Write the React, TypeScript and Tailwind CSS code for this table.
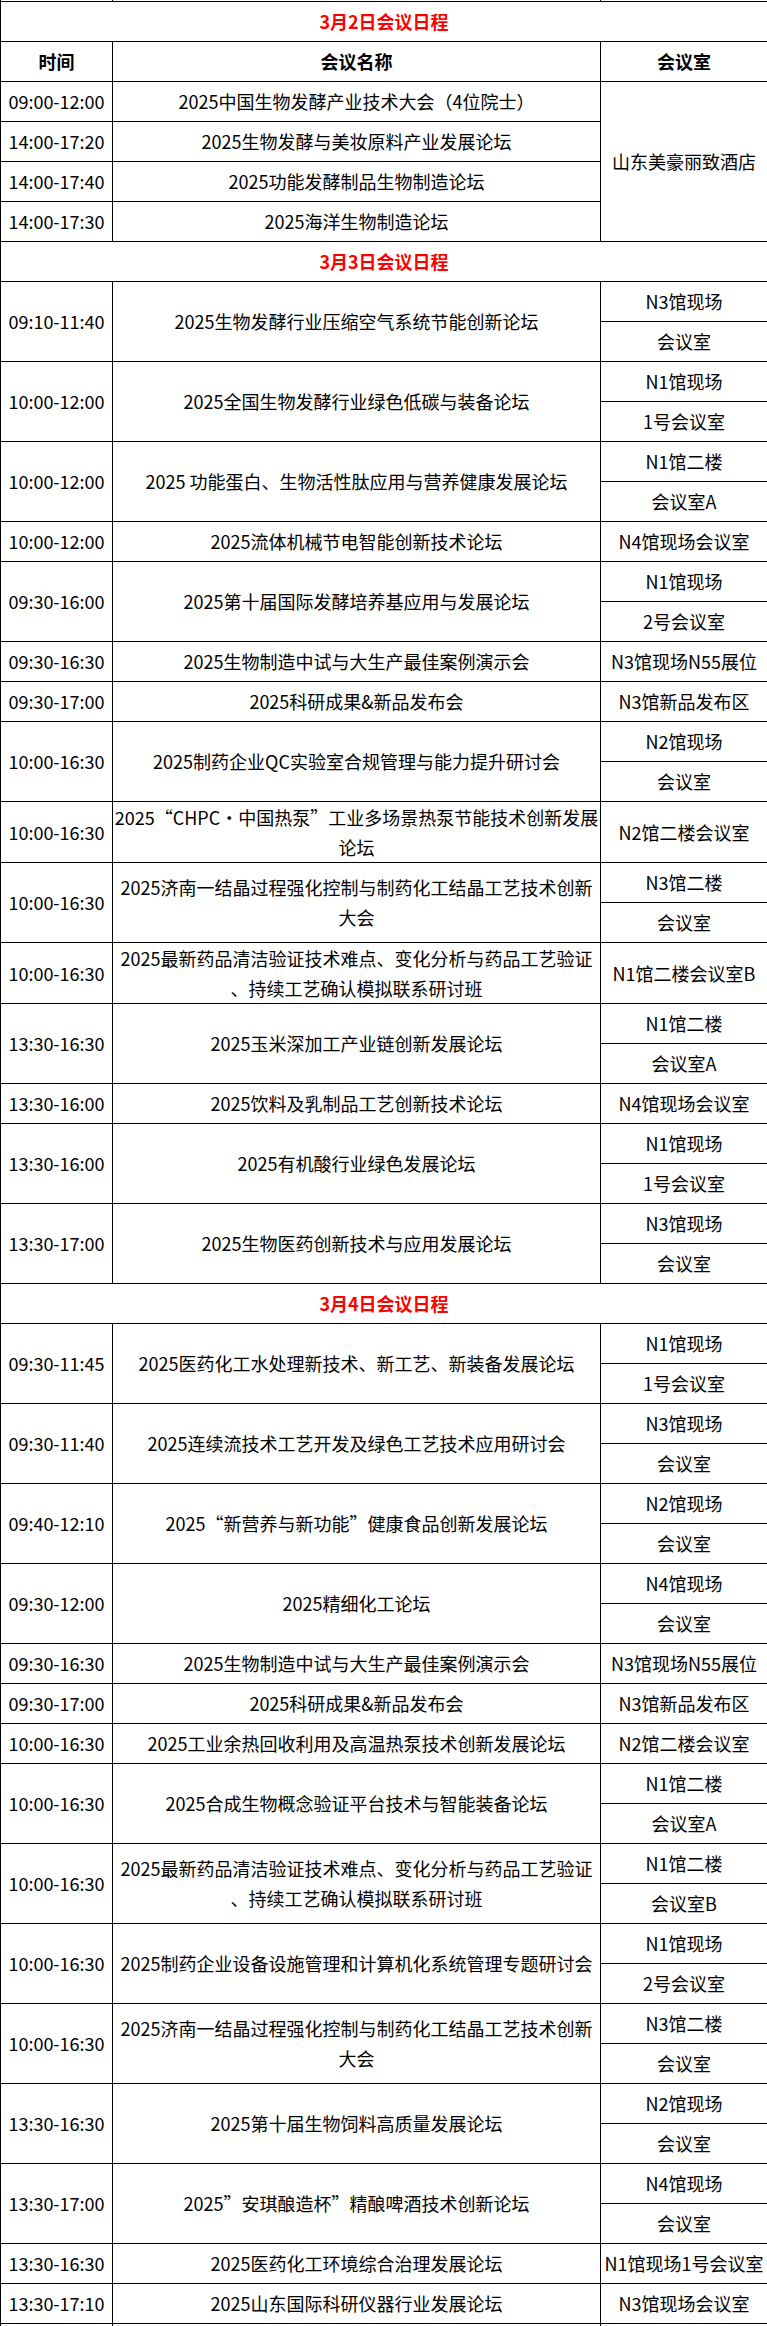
import React from "react";

type Row = { time: string; title: string | string[]; rooms: string[] };

const day3: Row[] = [
  { time: "09:10-11:40", title: "2025生物发酵行业压缩空气系统节能创新论坛", rooms: ["N3馆现场", "会议室"] },
  { time: "10:00-12:00", title: "2025全国生物发酵行业绿色低碳与装备论坛", rooms: ["N1馆现场", "1号会议室"] },
  { time: "10:00-12:00", title: "2025 功能蛋白、生物活性肽应用与营养健康发展论坛", rooms: ["N1馆二楼", "会议室A"] },
  { time: "10:00-12:00", title: "2025流体机械节电智能创新技术论坛", rooms: ["N4馆现场会议室"] },
  { time: "09:30-16:00", title: "2025第十届国际发酵培养基应用与发展论坛", rooms: ["N1馆现场", "2号会议室"] },
  { time: "09:30-16:30", title: "2025生物制造中试与大生产最佳案例演示会", rooms: ["N3馆现场N55展位"] },
  { time: "09:30-17:00", title: "2025科研成果&新品发布会", rooms: ["N3馆新品发布区"] },
  { time: "10:00-16:30", title: "2025制药企业QC实验室合规管理与能力提升研讨会", rooms: ["N2馆现场", "会议室"] },
  { time: "10:00-16:30", title: ["2025“CHPC·中国热泵”工业多场景热泵节能技术创新发展", "论坛"], rooms: ["N2馆二楼会议室"] },
  { time: "10:00-16:30", title: ["2025济南一结晶过程强化控制与制药化工结晶工艺技术创新", "大会"], rooms: ["N3馆二楼", "会议室"] },
  { time: "10:00-16:30", title: ["2025最新药品清洁验证技术难点、变化分析与药品工艺验证", "、持续工艺确认模拟联系研讨班"], rooms: ["N1馆二楼会议室B"] },
  { time: "13:30-16:30", title: "2025玉米深加工产业链创新发展论坛", rooms: ["N1馆二楼", "会议室A"] },
  { time: "13:30-16:00", title: "2025饮料及乳制品工艺创新技术论坛", rooms: ["N4馆现场会议室"] },
  { time: "13:30-16:00", title: "2025有机酸行业绿色发展论坛", rooms: ["N1馆现场", "1号会议室"] },
  { time: "13:30-17:00", title: "2025生物医药创新技术与应用发展论坛", rooms: ["N3馆现场", "会议室"] },
];

const day4: Row[] = [
  { time: "09:30-11:45", title: "2025医药化工水处理新技术、新工艺、新装备发展论坛", rooms: ["N1馆现场", "1号会议室"] },
  { time: "09:30-11:40", title: "2025连续流技术工艺开发及绿色工艺技术应用研讨会", rooms: ["N3馆现场", "会议室"] },
  { time: "09:40-12:10", title: "2025“新营养与新功能”健康食品创新发展论坛", rooms: ["N2馆现场", "会议室"] },
  { time: "09:30-12:00", title: "2025精细化工论坛", rooms: ["N4馆现场", "会议室"] },
  { time: "09:30-16:30", title: "2025生物制造中试与大生产最佳案例演示会", rooms: ["N3馆现场N55展位"] },
  { time: "09:30-17:00", title: "2025科研成果&新品发布会", rooms: ["N3馆新品发布区"] },
  { time: "10:00-16:30", title: "2025工业余热回收利用及高温热泵技术创新发展论坛", rooms: ["N2馆二楼会议室"] },
  { time: "10:00-16:30", title: "2025合成生物概念验证平台技术与智能装备论坛", rooms: ["N1馆二楼", "会议室A"] },
  { time: "10:00-16:30", title: ["2025最新药品清洁验证技术难点、变化分析与药品工艺验证", "、持续工艺确认模拟联系研讨班"], rooms: ["N1馆二楼", "会议室B"] },
  { time: "10:00-16:30", title: "2025制药企业设备设施管理和计算机化系统管理专题研讨会", rooms: ["N1馆现场", "2号会议室"] },
  { time: "10:00-16:30", title: ["2025济南一结晶过程强化控制与制药化工结晶工艺技术创新", "大会"], rooms: ["N3馆二楼", "会议室"] },
  { time: "13:30-16:30", title: "2025第十届生物饲料高质量发展论坛", rooms: ["N2馆现场", "会议室"] },
  { time: "13:30-17:00", title: "2025”安琪酿造杯”精酿啤酒技术创新论坛", rooms: ["N4馆现场", "会议室"] },
  { time: "13:30-16:30", title: "2025医药化工环境综合治理发展论坛", rooms: ["N1馆现场1号会议室"] },
  { time: "13:30-17:10", title: "2025山东国际科研仪器行业发展论坛", rooms: ["N3馆现场会议室"] },
];

const cell = "border border-black p-0 text-center align-middle whitespace-nowrap";

function Title({ lines }: { lines: string | string[] }) {
  if (typeof lines === "string") return <>{lines}</>;
  return (
    <>
      {lines.map((l, i) => (
        <React.Fragment key={i}>
          {i > 0 && <br />}
          {l}
        </React.Fragment>
      ))}
    </>
  );
}

function DayTitle({ text }: { text: string }) {
  return (
    <tr className="h-[40px]">
      <td colSpan={3} className={`${cell} font-bold text-[#ff0000]`}>
        {text}
      </td>
    </tr>
  );
}

function Rows({ rows }: { rows: Row[] }) {
  return (
    <>
      {rows.map((r, i) => {
        const multi = Array.isArray(r.title);
        if (r.rooms.length === 2) {
          return (
            <React.Fragment key={i}>
              <tr className="h-[40px]">
                <td rowSpan={2} className={cell}>{r.time}</td>
                <td rowSpan={2} className={cell}><Title lines={r.title} /></td>
                <td className={cell}>{r.rooms[0]}</td>
              </tr>
              <tr className="h-[40px]">
                <td className={cell}>{r.rooms[1]}</td>
              </tr>
            </React.Fragment>
          );
        }
        return (
          <tr key={i} className={multi ? "h-[60px]" : "h-[40px]"}>
            <td className={cell}>{r.time}</td>
            <td className={cell}><Title lines={r.title} /></td>
            <td className={cell}>{r.rooms[0]}</td>
          </tr>
        );
      })}
    </>
  );
}

export default function App() {
  const day2 = [
    { time: "09:00-12:00", title: "2025中国生物发酵产业技术大会（4位院士）" },
    { time: "14:00-17:20", title: "2025生物发酵与美妆原料产业发展论坛" },
    { time: "14:00-17:40", title: "2025功能发酵制品生物制造论坛" },
    { time: "14:00-17:30", title: "2025海洋生物制造论坛" },
  ];
  return (
    <div className="w-[767px] h-[2326px] overflow-hidden bg-white text-black font-['Noto_Sans_CJK_SC',sans-serif] text-[18px] leading-[30px]">
      <table className="w-[767px] table-fixed border-collapse">
        <colgroup>
          <col className="w-[112px]" />
          <col className="w-[488px]" />
          <col className="w-[167px]" />
        </colgroup>
        <tbody>
          <tr className="h-px">
            <td className="border-x border-b border-black p-0 h-px leading-[0px]"></td>
            <td className="border-x border-b border-black p-0 h-px leading-[0px]"></td>
            <td className="border-x border-b border-black p-0 h-px leading-[0px]"></td>
          </tr>
          <DayTitle text="3月2日会议日程" />
          <tr className="h-[40px] font-bold">
            <td className={cell}>时间</td>
            <td className={cell}>会议名称</td>
            <td className={cell}>会议室</td>
          </tr>
          {day2.map((r, i) => (
            <tr key={i} className="h-[40px]">
              <td className={cell}>{r.time}</td>
              <td className={cell}>{r.title}</td>
              {i === 0 && (
                <td rowSpan={4} className={cell}>山东美豪丽致酒店</td>
              )}
            </tr>
          ))}
          <DayTitle text="3月3日会议日程" />
          <Rows rows={day3} />
          <DayTitle text="3月4日会议日程" />
          <Rows rows={day4} />
          <tr className="h-[40px]">
            <td className={cell}></td>
            <td className={cell}></td>
            <td className={cell}></td>
          </tr>
        </tbody>
      </table>
    </div>
  );
}
